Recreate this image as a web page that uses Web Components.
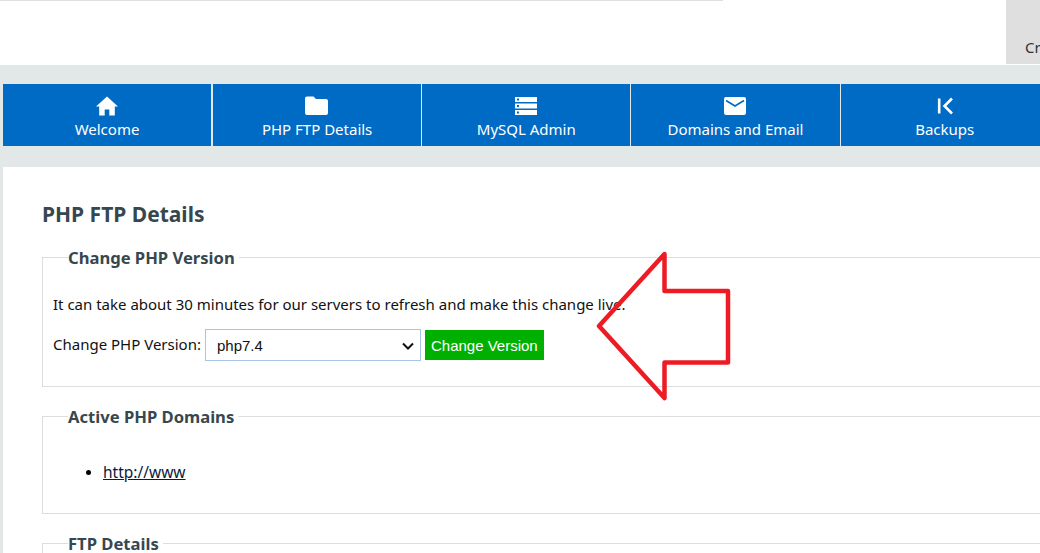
<!DOCTYPE html>
<html lang="en">
<head>
<meta charset="utf-8">
<title>PHP FTP Details</title>
<style>
  html, body { margin: 0; height: 553px; overflow: hidden; background: #e2e8e8; }
  body { font-family: "Noto Sans", "Open Sans", sans-serif; color: #000; }
</style>
</head>
<body>
<template id="template-top-bar">
  <style>
    :host { display: flex; justify-content: flex-end; height: 65px; background: #fff; box-sizing: border-box; position: relative; }
    .rule { position: absolute; top: 0; left: 0; width: 723px; height: 1px; background: #e0e0e0; }
    .tab { width: 34px; margin-bottom: 1px; background: #dfdfdf; border-top: 1px solid #e0e0e0; overflow: hidden; box-sizing: border-box; padding: 36px 0 0 19px; font-size: 15px; line-height: 20px; color: #333; white-space: nowrap; }
  </style>
  <div class="rule"></div>
  <div class="tab"><slot></slot></div>
</template>

<template id="template-nav-bar">
  <style>
    :host { display: flex; margin: 19px 0 21px 3px; height: 62px; width: 1200px; }
  </style>
  <slot></slot>
</template>

<template id="template-nav-item">
  <style>
    :host { display: flex; flex-direction: column; align-items: center; flex: 0 0 209.2px; box-sizing: border-box; height: 62px; background: #006bc4; border-right: 1px solid #e2e8e8; color: #fff; font-size: 15px; line-height: 20px; }
    :host(.wide) { flex-basis: 210px; border-right-width: 2px; }
    .icon { height: 22px; margin-top: 11px; display: flex; align-items: center; justify-content: center; }
    .label { margin-top: 2px; }
  </style>
  <div class="icon"><slot name="icon"></slot></div>
  <div class="label"><slot></slot></div>
</template>

<template id="template-page-panel">
  <style>
    :host { display: block; margin-left: 3px; width: 1200px; height: 386px; background: #fff; padding: 32px 0 0 39px; box-sizing: border-box; overflow: hidden; }
    h2 { margin: 0 0 16px; font-size: 21px; line-height: 30px; font-weight: 700; color: #37474f; }
  </style>
  <h2><slot name="title"></slot></h2>
  <slot></slot>
</template>

<template id="template-detail-group">
  <style>
    :host { display: block; margin-bottom: 17px; }
    fieldset { margin: 0; padding: 0 10px; border: 1px solid #ddd; min-height: var(--group-height, auto); box-sizing: border-box; }
    legend { margin-left: 15px; padding: 2px 4px 0 0; font-size: 16.6px; line-height: 22px; font-weight: 700; color: #37474f; }
  </style>
  <fieldset>
    <legend><slot name="legend"></slot></legend>
    <slot></slot>
  </fieldset>
</template>

<template id="template-version-form">
  <style>
    :host { display: block; font-size: 15px; line-height: 20px; color: #111; }
    p { margin: 25px 0 15px; }
    .row { display: flex; align-items: center; }
    label { margin: 0 4px 2px 0; }
    .select { position: relative; margin-right: 4px; display: flex; }
    select { appearance: none; width: 216px; height: 32px; padding: 0 0 0 11px; margin: 0; background: #fff; border: 1px solid #a9c4e4; border-radius: 0; font: 15px "Liberation Sans", Arial, sans-serif; color: #111; }
    .select svg { position: absolute; right: 7px; top: 13px; pointer-events: none; }
    button { height: 30px; padding: 0 6px; border: 0; border-radius: 0; background: #00b000; color: #fff; font: 15px "Liberation Sans", Arial, sans-serif; }
  </style>
  <p><slot></slot></p>
  <div class="row">
    <label for="v">Change PHP Version:</label>
    <div class="select">
      <select id="v"><option>php7.4</option></select>
      <svg width="12" height="8" viewBox="0 0 12 8"><path d="M1 1.500 6 6.500 11 1.500" fill="none" stroke="#111" stroke-width="2"/></svg>
    </div>
    <button type="button">Change Version</button>
  </div>
</template>

<template id="template-domain-list">
  <style>
    :host { display: block; font-size: 15.500px; line-height: 20px; }
    ul { margin: 34px 0 0; padding: 0 0 0 50px; list-style: none; }
    li { position: relative; }
    li::before { content: ""; position: absolute; left: -17px; top: 8px; width: 5px; height: 5px; border-radius: 50%; background: #000; }
    a { color: #0b1a3c; text-decoration: underline; }
  </style>
  <ul><li><a href="#"><slot></slot></a></li></ul>
</template>

<template id="template-red-arrow">
  <style>
    :host { position: absolute; left: 590px; top: 245px; width: 150px; height: 165px; display: block; pointer-events: none; }
    svg { display: block; }
  </style>
  <svg width="150" height="165" viewBox="590 245 150 165" fill="none" stroke="#ed1c24" stroke-width="4.500" stroke-linejoin="round">
    <path d="M664.500 254 L599 326 L664.500 398 V362.500 H728 V291 H664.500 Z"/>
  </svg>
</template>

<top-bar>Create</top-bar>
<nav-bar>
  <nav-item class="wide">
    <svg slot="icon" width="22" height="20" viewBox="0 0 22 20"><path fill="#fff" d="M11 .5 0 10.600h3.200V19.500h5.500v-6h4.600v6h5.500V10.600H22z"/></svg>
    Welcome
  </nav-item>
  <nav-item>
    <svg slot="icon" width="24" height="20" viewBox="0 0 24 20"><path fill="#fff" d="M2.500 1H9l2.500 2.500h10A2 2 0 0 1 23.500 5.500v12a2 2 0 0 1-2 2h-19a2 2 0 0 1-2-2V3a2 2 0 0 1 2-2z" transform="translate(-.5 -.5)"/></svg>
    PHP FTP Details
  </nav-item>
  <nav-item>
    <svg slot="icon" width="24" height="20" viewBox="0 0 24 20"><path fill="#fff" fill-rule="evenodd" d="M1 1h22v5H1zM3 2.500v2h2v-2zM1 7.500h22v5H1zM3 9v2h2V9zM1 14h22v5H1zM3 15.500v2h2v-2z"/></svg>
    MySQL Admin
  </nav-item>
  <nav-item>
    <svg slot="icon" width="24" height="20" viewBox="0 0 24 20"><rect x="1" y="1" width="22" height="18" rx="2" fill="#fff"/><path d="M3 4.500l9 5.500 9-5.500" fill="none" stroke="#006bc4" stroke-width="1.600"/></svg>
    Domains and Email
  </nav-item>
  <nav-item>
    <svg slot="icon" width="24" height="20" viewBox="0 0 24 20"><path fill="none" stroke="#fff" stroke-width="2.600" d="M6.200 2.500v15M19 2.500 11.500 10l7.500 7.500"/></svg>
    Backups
  </nav-item>
  <nav-item></nav-item>
</nav-bar>
<page-panel>
  <span slot="title">PHP FTP Details</span>
  <detail-group style="--group-height:142px">
    <span slot="legend">Change PHP Version</span>
    <version-form>It can take about 30 minutes for our servers to refresh and make this change live.</version-form>
  </detail-group>
  <detail-group style="--group-height:110px">
    <span slot="legend">Active PHP Domains</span>
    <domain-list>http://www</domain-list>
  </detail-group>
  <detail-group style="--group-height:60px">
    <span slot="legend">FTP Details</span>
  </detail-group>
</page-panel>
<red-arrow></red-arrow>

<script>
  (function(){
    function define(name) {
      const template = document.getElementById('template-' + name);
      customElements.define(name, class extends HTMLElement {
        constructor() {
          super();
          this.attachShadow({mode: 'open'}).appendChild(template.content.cloneNode(true));
        }
      });
    }

    ['top-bar', 'nav-bar', 'nav-item', 'page-panel', 'detail-group', 'version-form', 'domain-list', 'red-arrow'].forEach(define);
  })();
</script>
</body>
</html>
